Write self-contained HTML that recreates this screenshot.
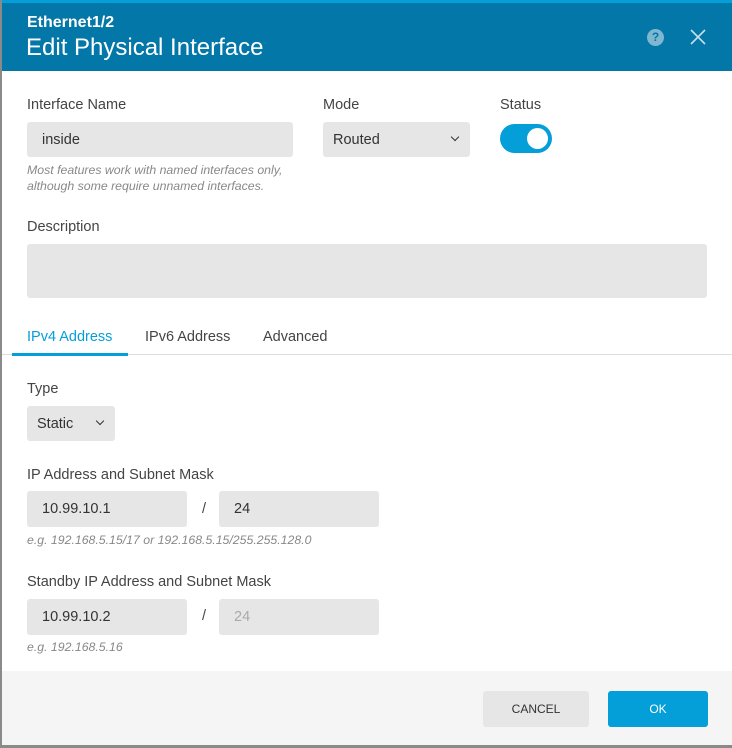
<!DOCTYPE html>
<html><head><style>
*{box-sizing:border-box;margin:0;padding:0}
body{width:732px;height:748px;overflow:hidden;background:#fff;font-family:"Liberation Sans",sans-serif;position:relative;color:#333}
.lb{position:absolute;left:0;top:0;width:2px;height:748px;background:#8a8a8a}
.top{position:absolute;left:0;top:0;width:732px;height:3px;background:#049fd9}
.hdr{position:absolute;left:2px;top:3px;width:730px;height:68px;background:#0277a8;color:#fff}
.abs{position:absolute}
.lbl{position:absolute;font-size:14.5px;color:#444}
.inp{position:absolute;background:#e6e6e6;border-radius:3px;font-size:14.5px;color:#333;padding-left:15px;display:flex;align-items:center}
.hint{position:absolute;font-size:12.3px;font-style:italic;color:#888;line-height:16px}
.chev{position:absolute;width:6px;height:6px;border-right:1.6px solid #333;border-bottom:1.6px solid #333;transform:rotate(45deg)}
</style></head><body>
<div class="top"></div>
<div class="hdr">
 <div class="abs" style="left:25px;top:11px;font-size:16px;font-weight:bold">Ethernet1/2</div>
 <div class="abs" style="left:24px;top:31px;font-size:24px">Edit Physical Interface</div>
 <div class="abs" style="left:645px;top:26px;width:17px;height:17px;border-radius:50%;background:#7fb6d0;color:#0277a8;font-size:12px;font-weight:bold;text-align:center;line-height:17px">?</div>
 <svg class="abs" style="left:688px;top:26px" width="16" height="16"><path d="M1 1L15 15M15 1L1 15" stroke="#c8dfea" stroke-width="1.6"/></svg>
</div>
<div class="lb"></div>
<div class="lbl" style="left:27px;top:97px">Interface Name</div>
<div class="lbl" style="left:323px;top:97px">Mode</div>
<div class="lbl" style="left:500px;top:97px">Status</div>
<div class="inp" style="left:27px;top:122px;width:266px;height:35px">inside</div>
<div class="inp" style="left:323px;top:122px;width:147px;height:35px;padding-left:10px">Routed</div>
<div class="chev" style="left:452px;top:134px"></div>
<div class="abs" style="left:500px;top:124px;width:52px;height:29px;border-radius:15px;background:#049fd9"></div>
<div class="abs" style="left:527px;top:128px;width:21px;height:21px;border-radius:50%;background:#fff"></div>
<div class="hint" style="left:27px;top:162px">Most features work with named interfaces only,<br>although some require unnamed interfaces.</div>
<div class="lbl" style="left:27px;top:219px">Description</div>
<div class="inp" style="left:27px;top:244px;width:680px;height:54px"></div>
<div class="abs" style="left:2px;top:354px;width:730px;height:1px;background:#ddd"></div>
<div class="abs" style="left:12px;top:353px;width:116px;height:3px;background:#049fd9"></div>
<div class="lbl" style="left:27px;top:329px;color:#049fd9">IPv4 Address</div>
<div class="lbl" style="left:145px;top:329px">IPv6 Address</div>
<div class="lbl" style="left:263px;top:329px">Advanced</div>
<div class="lbl" style="left:27px;top:381px">Type</div>
<div class="inp" style="left:27px;top:406px;width:88px;height:35px;padding-left:10px">Static</div>
<div class="chev" style="left:97px;top:418px"></div>
<div class="lbl" style="left:27px;top:467px">IP Address and Subnet Mask</div>
<div class="inp" style="left:27px;top:491px;width:160px;height:36px">10.99.10.1</div>
<div class="lbl" style="left:202px;top:501px">/</div>
<div class="inp" style="left:219px;top:491px;width:160px;height:36px">24</div>
<div class="hint" style="left:27px;top:532px">e.g. 192.168.5.15/17 or 192.168.5.15/255.255.128.0</div>
<div class="lbl" style="left:27px;top:574px">Standby IP Address and Subnet Mask</div>
<div class="inp" style="left:27px;top:599px;width:160px;height:36px">10.99.10.2</div>
<div class="lbl" style="left:202px;top:608px">/</div>
<div class="inp" style="left:219px;top:599px;width:160px;height:36px;color:#aaa">24</div>
<div class="hint" style="left:27px;top:639px">e.g. 192.168.5.16</div>
<div class="abs" style="left:2px;top:671px;width:730px;height:74px;background:#f5f5f5"></div>
<div class="abs" style="left:0;top:745px;width:732px;height:3px;background:#8a8a8a"></div>
<div class="abs" style="left:483px;top:691px;width:106px;height:36px;background:#e6e6e6;border-radius:3px;font-size:12px;text-align:center;line-height:36px;color:#333">CANCEL</div>
<div class="abs" style="left:608px;top:691px;width:100px;height:36px;background:#049fd9;border-radius:3px;font-size:12px;text-align:center;line-height:36px;color:#fff">OK</div>
</body></html>
